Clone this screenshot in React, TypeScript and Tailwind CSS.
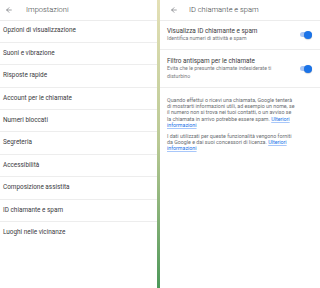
import { ArrowLeft } from "lucide-react"

const settings = [
  "Opzioni di visualizzazione",
  "Suoni e vibrazione",
  "Risposte rapide",
  "Account per le chiamate",
  "Numeri bloccati",
  "Segreteria",
  "Accessibilità",
  "Composizione assistita",
  "ID chiamante e spam",
  "Luoghi nelle vicinanze",
]

const Toggle = () => (
  <div className="relative mr-[8px] h-[5px] w-[12px] shrink-0 rounded-full bg-[#a9c6f5]">
    <div className="absolute -top-[1.5px] right-0 h-[8px] w-[8px] rounded-full bg-[#1a73e8] shadow-[0_0.5px_1px_rgba(0,0,0,0.3)]" />
  </div>
)

const Link = ({ label }: { label: string }) => (
  <span className="text-[#1a73e8] underline decoration-[#a8c7fa]">{label}</span>
)

const App = () => {
  return (
    <div
      className="flex h-[288px] w-[320px] overflow-hidden bg-white"
      style={{ fontFamily: "Roboto, 'Noto Sans', sans-serif" }}
    >
      {/* settings list */}
      <section className="w-[157px] shrink-0">
        <header className="flex h-[20.5px] items-center border-b border-[#ececec]">
          <ArrowLeft className="ml-[5px] h-[8px] w-[8px] text-[#5f6368]" strokeWidth={1.8} />
          <h1 className="ml-[13px] text-[7.5px] font-light text-[#3c3f43]">Impostazioni</h1>
        </header>
        <ul>
          {settings.map((item, i) => (
            <li
              key={item}
              className={`flex h-[22.4px] items-center pl-[3px] text-[6.4px] font-normal text-[#3a3b3e] ${
                i < settings.length - 1 ? "border-b border-[#ededed]" : ""
              }`}
            >
              {item}
            </li>
          ))}
        </ul>
      </section>

      <div className="w-[3px] shrink-0 bg-gradient-to-b from-[#e4e0b6] via-[#b9c994] to-[#4c985a]" />

      {/* caller id & spam */}
      <section className="flex-1">
        <header className="flex h-[20.5px] items-center border-b border-[#ececec]">
          <ArrowLeft className="ml-[10px] h-[8px] w-[8px] text-[#5f6368]" strokeWidth={1.8} />
          <h1 className="ml-[11px] text-[7.5px] font-light text-[#3c3f43]">ID chiamante e spam</h1>
        </header>

        <div className="flex h-[29.5px] items-center border-b border-[#ededed] pl-[7px]">
          <div className="flex-1">
            <p className="text-[6.4px] leading-[8px] text-[#3a3b3e]">
              Visualizza ID chiamante e spam
            </p>
            <p className="text-[5.2px] leading-[7.5px] text-[#77797d]">
              Identifica numeri di attività e spam
            </p>
          </div>
          <Toggle />
        </div>

        <div className="flex h-[38px] items-center border-b border-[#ededed] pl-[7px]">
          <div className="flex-1">
            <p className="text-[6.4px] leading-[8px] text-[#3a3b3e]">
              Filtro antispam per le chiamate
            </p>
            <p className="text-[5.2px] leading-[7.5px] text-[#77797d]">
              Evita che le presunte chiamate indesiderate ti
              <br />
              disturbino
            </p>
          </div>
          <Toggle />
        </div>

        <div className="flex flex-col gap-[5px] px-[7px] pt-[9px] text-[5.3px] leading-[6.2px] text-[#6a6d71]">
          <p>
            Quando effettui o ricevi una chiamata, Google tenterà
            <br />
            di mostrarti informazioni utili, ad esempio un nome, se
            <br />
            il numero non si trova nei tuoi contatti, o un avviso se
            <br />
            la chiamata in arrivo potrebbe essere spam. <Link label="Ulteriori" />
            <br />
            <Link label="informazioni" />
          </p>
          <p>
            I dati utilizzati per queste funzionalità vengono forniti
            <br />
            da Google e dai suoi concessori di licenza. <Link label="Ulteriori" />
            <br />
            <Link label="informazioni" />
          </p>
        </div>
      </section>
    </div>
  )
}

export default App
